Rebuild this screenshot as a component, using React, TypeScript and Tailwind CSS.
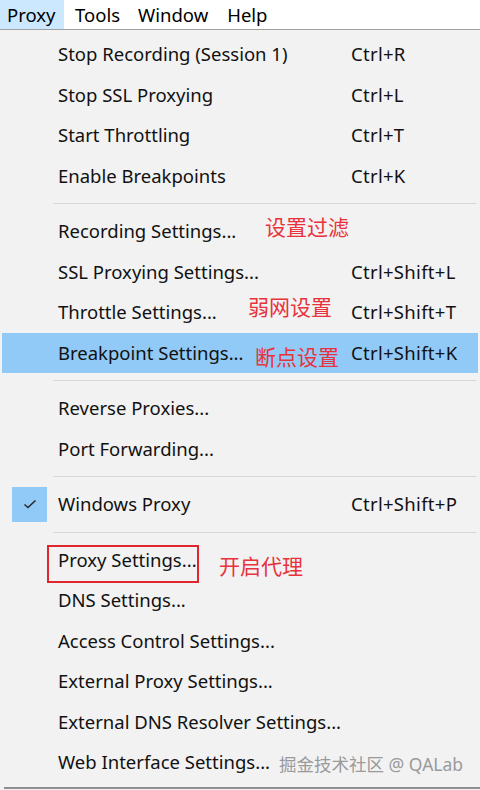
import React from 'react';

type Item =
  | { kind: 'sep' }
  | {
      kind: 'item';
      label: string;
      shortcut?: string;
      active?: boolean;
      checked?: boolean;
      boxed?: boolean;
      note?: { text: string; className: string };
    };

const ITEMS: Item[] = [
  { kind: 'item', label: 'Stop Recording (Session 1)', shortcut: 'Ctrl+R' },
  { kind: 'item', label: 'Stop SSL Proxying', shortcut: 'Ctrl+L' },
  { kind: 'item', label: 'Start Throttling', shortcut: 'Ctrl+T' },
  { kind: 'item', label: 'Enable Breakpoints', shortcut: 'Ctrl+K' },
  { kind: 'sep' },
  { kind: 'item', label: 'Recording Settings...', note: { text: '设置过滤', className: 'left-[263px] top-[6px]' } },
  { kind: 'item', label: 'SSL Proxying Settings...', shortcut: 'Ctrl+Shift+L' },
  { kind: 'item', label: 'Throttle Settings...', shortcut: 'Ctrl+Shift+T', note: { text: '弱网设置', className: 'left-[246px] top-[5px]' } },
  { kind: 'item', label: 'Breakpoint Settings...', shortcut: 'Ctrl+Shift+K', active: true, note: { text: '断点设置', className: 'left-[253px] top-[14px]' } },
  { kind: 'sep' },
  { kind: 'item', label: 'Reverse Proxies...' },
  { kind: 'item', label: 'Port Forwarding...' },
  { kind: 'sep' },
  { kind: 'item', label: 'Windows Proxy', shortcut: 'Ctrl+Shift+P', checked: true },
  { kind: 'sep' },
  { kind: 'item', label: 'Proxy Settings...', boxed: true, note: { text: '开启代理', className: 'left-[217px] top-[16px]' } },
  { kind: 'item', label: 'DNS Settings...' },
  { kind: 'item', label: 'Access Control Settings...' },
  { kind: 'item', label: 'External Proxy Settings...' },
  { kind: 'item', label: 'External DNS Resolver Settings...' },
  { kind: 'item', label: 'Web Interface Settings...' },
];

const FONT = { fontFamily: '"Noto Sans", "Noto Sans CJK SC", sans-serif' };

function Row({ item }: { item: Extract<Item, { kind: 'item' }> }) {
  return (
    <div className={`relative h-[40.5px] flex items-center mx-[2px] ${item.active ? 'bg-[#91c9f7]' : ''}`}>
      <div className="w-[56px] flex-shrink-0 flex justify-center">
        {item.checked && (
          <div className="w-[35px] h-[35px] ml-[-1px] bg-[#91c9f7] flex items-center justify-center">
            <svg width="16" height="12" viewBox="0 0 16 12" fill="none">
              <path d="M2.5 6.5 L6 9.5 L13.5 2.5" stroke="#2b2b2b" strokeWidth="1.6" />
            </svg>
          </div>
        )}
      </div>
      <div className="w-[293px] flex-shrink-0 text-[18.5px] text-[#111] whitespace-nowrap">{item.label}</div>
      <div className="text-[18.5px] tracking-[0.3px] text-[#111] whitespace-nowrap">{item.shortcut}</div>
      {item.boxed && (
        <div className="absolute left-[45px] top-[5.5px] w-[152px] h-[38px] border-2 border-[#e0262e]" />
      )}
      {item.note && (
        <span className={`absolute text-[21px] leading-none text-[#e8333c] ${item.note.className}`}>{item.note.text}</span>
      )}
    </div>
  );
}

export default function App() {
  return (
    <div className="w-[480px] h-[790px] overflow-hidden bg-[#f2f2f2] relative" style={FONT}>
      {/* menu bar */}
      <div className="h-[30px] bg-white flex items-center text-[18.5px] text-black border-b border-[#a0a0a0]">
        <div className="h-full w-[64px] bg-[#cce8ff] flex items-center pl-[7px]">Proxy</div>
        <div className="pl-[11px]">Tools</div>
        <div className="pl-[18px]">Window</div>
        <div className="pl-[19px]">Help</div>
      </div>

      <div className="pt-[4px]">
        {ITEMS.map((it, i) =>
          it.kind === 'sep' ? (
            <div key={i} className="h-[15px] flex items-center pl-[53px] pr-[4px]">
              <div className="h-px w-full bg-[#d7d7d7]" />
            </div>
          ) : (
            <Row key={i} item={it} />
          )
        )}
      </div>

      <span className="absolute left-[279px] top-[751px] text-[17.5px] text-[#9a9a9a] whitespace-nowrap">
        掘金技术社区 @ QALab
      </span>

      <div className="absolute left-[4px] right-0 bottom-[1px] h-[2px] bg-[#8f8f8f]" />
    </div>
  );
}
